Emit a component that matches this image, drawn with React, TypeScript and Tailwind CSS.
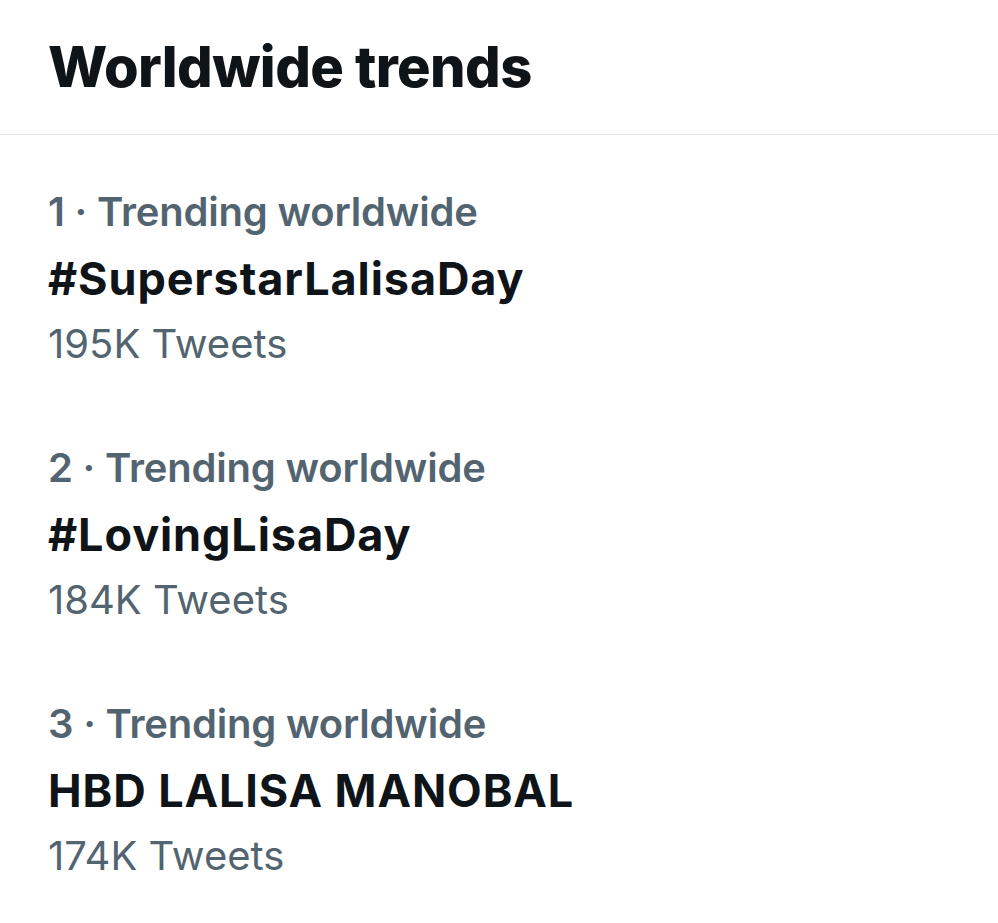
import React from 'react';

interface Trend {
  rank: number;
  name: string;
  count: string;
}

const trends: Trend[] = [
  { rank: 1, name: '#SuperstarLalisaDay', count: '195K Tweets' },
  { rank: 2, name: '#LovingLisaDay', count: '184K Tweets' },
  { rank: 3, name: 'HBD LALISA MANOBAL', count: '174K Tweets' },
];

const App: React.FC = () => {
  return (
    <div className="w-[998px] h-[923px] bg-white overflow-hidden font-['Inter',sans-serif]">
      <div className="h-[135px] px-[48px] flex items-center border-b border-[#e1e4e6]">
        <h1 className="text-[56px] font-extrabold text-[#0f1419] tracking-[-0.6px]">Worldwide trends</h1>
      </div>
      <div className="pt-[44px] px-[48px] flex flex-col gap-[60px]">
        {trends.map(t => (
          <div key={t.rank} className="flex flex-col">
            <div className="h-[66px] flex items-center text-[40px] font-semibold text-[#536471] tracking-[-0.2px]">
              {t.rank} · Trending worldwide
            </div>
            <div className="h-[68px] flex items-center text-[45px] font-bold text-[#0f1419] tracking-[0.9px]">
              {t.name}
            </div>
            <div className="h-[62px] flex items-center text-[40px] text-[#536471]">
              {t.count}
            </div>
          </div>
        ))}
      </div>
    </div>
  );
};

export default App;
